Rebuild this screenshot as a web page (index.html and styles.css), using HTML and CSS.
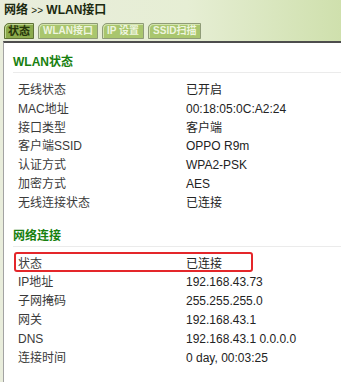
FILE: index.html
```html
<!DOCTYPE html>
<html lang="zh-CN">
<head>
    <meta charset="UTF-8">
    <meta name="viewport" content="width=device-width, initial-scale=1.0">
    <title>WLAN接口</title>
    <link rel="stylesheet" href="styles.css">
</head>
<body>
    <h1 class="crumb">网络 <span class="sep">&gt;&gt;</span> WLAN接口</h1>
    <ul class="tabs">
        <li class="tab active">状态</li>
        <li class="tab">WLAN接口</li>
        <li class="tab">IP 设置</li>
        <li class="tab">SSID扫描</li>
    </ul>
    <div class="panel">
        <h2 class="sec-title">WLAN状态</h2>
        <div class="info">
            <div class="row"><span>无线状态</span><span class="val">已开启</span></div>
            <div class="row"><span>MAC地址</span><span class="val">00:18:05:0C:A2:24</span></div>
            <div class="row"><span>接口类型</span><span class="val">客户端</span></div>
            <div class="row"><span>客户端SSID</span><span class="val">OPPO R9m</span></div>
            <div class="row"><span>认证方式</span><span class="val">WPA2-PSK</span></div>
            <div class="row"><span>加密方式</span><span class="val">AES</span></div>
            <div class="row"><span>无线连接状态</span><span class="val">已连接</span></div>
        </div>

        <h2 class="sec-title second">网络连接</h2>
        <div class="info">
            <!-- 红框标注 -->
            <div class="row marked"><span>状态</span><span class="val">已连接</span></div>
            <div class="row"><span>IP地址</span><span class="val">192.168.43.73</span></div>
            <div class="row"><span>子网掩码</span><span class="val">255.255.255.0</span></div>
            <div class="row"><span>网关</span><span class="val">192.168.43.1</span></div>
            <div class="row"><span>DNS</span><span class="val">192.168.43.1 0.0.0.0</span></div>
            <div class="row"><span>连接时间</span><span class="val">0 day, 00:03:25</span></div>
        </div>
    </div>
</body>
</html>
```

FILE: styles.css
```css
html, body {
    height: 100%;
}
body {
    margin: 0;
    font-family: "Liberation Sans", "Noto Sans CJK SC", sans-serif;
    font-size: 12px;
    color: #3a3a3a;
    background: linear-gradient(to right, #e9eddc 0%, #e6eed4 55%, #cfe0ad 100%);
    display: flex;
    flex-direction: column;
    overflow: hidden;
}
.crumb {
    margin: 3px 0 0 4px;
    font-size: 12px;
    line-height: 15px;
    font-weight: bold;
    color: #1c2a10;
}
.crumb .sep {
    font-weight: normal;
    font-size: 10px;
}
.tabs {
    list-style: none;
    margin: 5px 0 2px 4px;
    padding: 0;
    display: flex;
    gap: 4px;
}
.tab {
    height: 16px;
    line-height: 14px;
    padding: 0 4px;
    font-size: 10px;
    font-weight: bold;
    color: #eef5df;
    background-color: #a9c66e;
    border: 1px solid #8f9b78;
    border-radius: 5px 0 0 0;
    box-shadow: inset 1px 1px 0 #d3e4ae;
    box-sizing: border-box;
}
.tab.active {
    padding: 0 3px;
    font-size: 11px;
    color: #26350a;
    background-color: #8cab4c;
    border-color: #5f7236;
    box-shadow: inset 1px 1px 0 #c1d793;
}
.panel {
    flex: 1;
    margin-left: 3px;
    background-color: #ffffff;
    border-top: 2px solid #4d4d4d;
    border-left: 1px solid #a3a3a3;
    padding: 9px 0 0 9px;
}
.sec-title {
    margin: 0;
    line-height: 20px;
    font-size: 12px;
    font-weight: bold;
    color: #17800f;
    border-bottom: 1px solid #ebebeb;
}
.sec-title.second {
    margin-top: 13px;
}
.info {
    margin-top: 8px;
}
.row {
    display: grid;
    grid-template-columns: 168px 1fr;
    padding-left: 5px;
    line-height: 18.8px;
}
.val {
    color: #232323;
}
.row.marked {
    position: relative;
}
.row.marked::after {
    content: "";
    position: absolute;
    left: 1px;
    top: -3px;
    width: 239px;
    height: 20px;
    box-sizing: border-box;
    border: 2px solid #e4262a;
    border-radius: 3px;
}
```
